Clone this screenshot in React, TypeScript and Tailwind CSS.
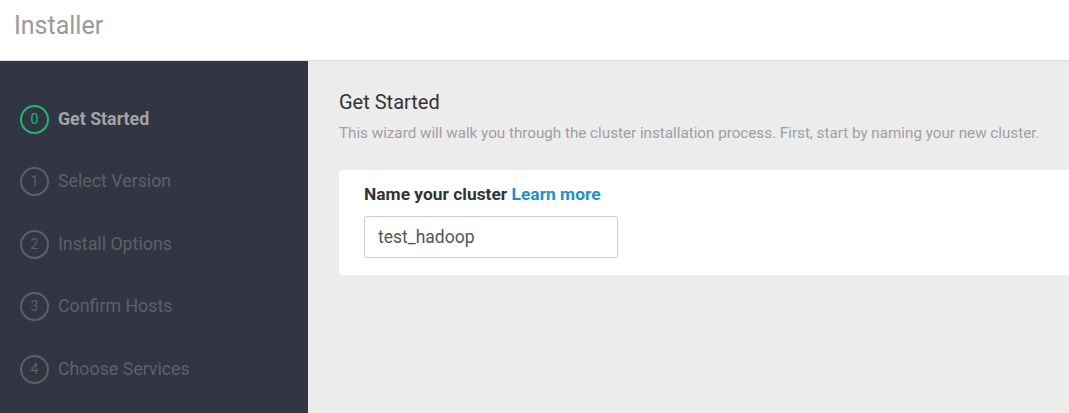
const steps = ["Get Started", "Select Version", "Install Options", "Confirm Hosts", "Choose Services"];

function Step({ index, label, active }: { index: number; label: string; active: boolean }) {
  return (
    <li className="flex items-center h-[62.5px]">
      <span
        className={
          active
            ? "w-[29px] h-[29px] rounded-full border-2 border-[#1fb77a] text-[#1fb77a] flex items-center justify-center text-[14px]"
            : "w-[29px] h-[29px] rounded-full border-2 border-[#5f6066] text-[#5f6066] flex items-center justify-center text-[14px]"
        }
      >
        {index}
      </span>
      <span
        className={
          active
            ? "ml-[9px] text-[17.8px] font-bold text-[#a3a3a6]"
            : "ml-[9px] text-[17.8px] text-[#5f6066]"
        }
      >
        {label}
      </span>
    </li>
  );
}

export default function App() {
  return (
    <div className="w-[1069px] h-[413px] overflow-hidden flex flex-col font-['Roboto',sans-serif]">
      <header className="h-[61px] shrink-0 bg-white border-b border-[#dedede] flex items-start">
        <h1 className="ml-[14px] mt-[7px] text-[25px] text-[#9a9a9a]">Installer</h1>
      </header>
      <div className="flex flex-1">
        <aside className="w-[308px] shrink-0 bg-[#323544] pl-[20px] pt-[27px]">
          <ol>
            {steps.map((s, i) => (
              <Step key={s} index={i} label={s} active={i === 0} />
            ))}
          </ol>
        </aside>
        <main className="flex-1 bg-[#ececec] pl-[31px] pt-[29px]">
          <h2 className="text-[20px] text-[#333] leading-[24px]">Get Started</h2>
          <p className="mt-[9px] text-[15.2px] text-[#a0a0a0] leading-[20px] whitespace-nowrap">
            This wizard will walk you through the cluster installation process. First, start by naming your new cluster.
          </p>
          <section className="mt-[27px] w-[760px] h-[105px] bg-white rounded-[4px] pl-[25px] pt-[12px]">
            <label className="block text-[17.4px] font-bold text-[#333] leading-[24px]">
              Name your cluster <span className="text-[#1f91c5]">Learn more</span>
            </label>
            <input
              readOnly
              value="test_hadoop"
              className="mt-[10px] w-[254px] h-[42px] border border-[#ccc] rounded-[3px] px-[13px] text-[17.5px] text-[#555] outline-none"
            />
          </section>
        </main>
      </div>
    </div>
  );
}
